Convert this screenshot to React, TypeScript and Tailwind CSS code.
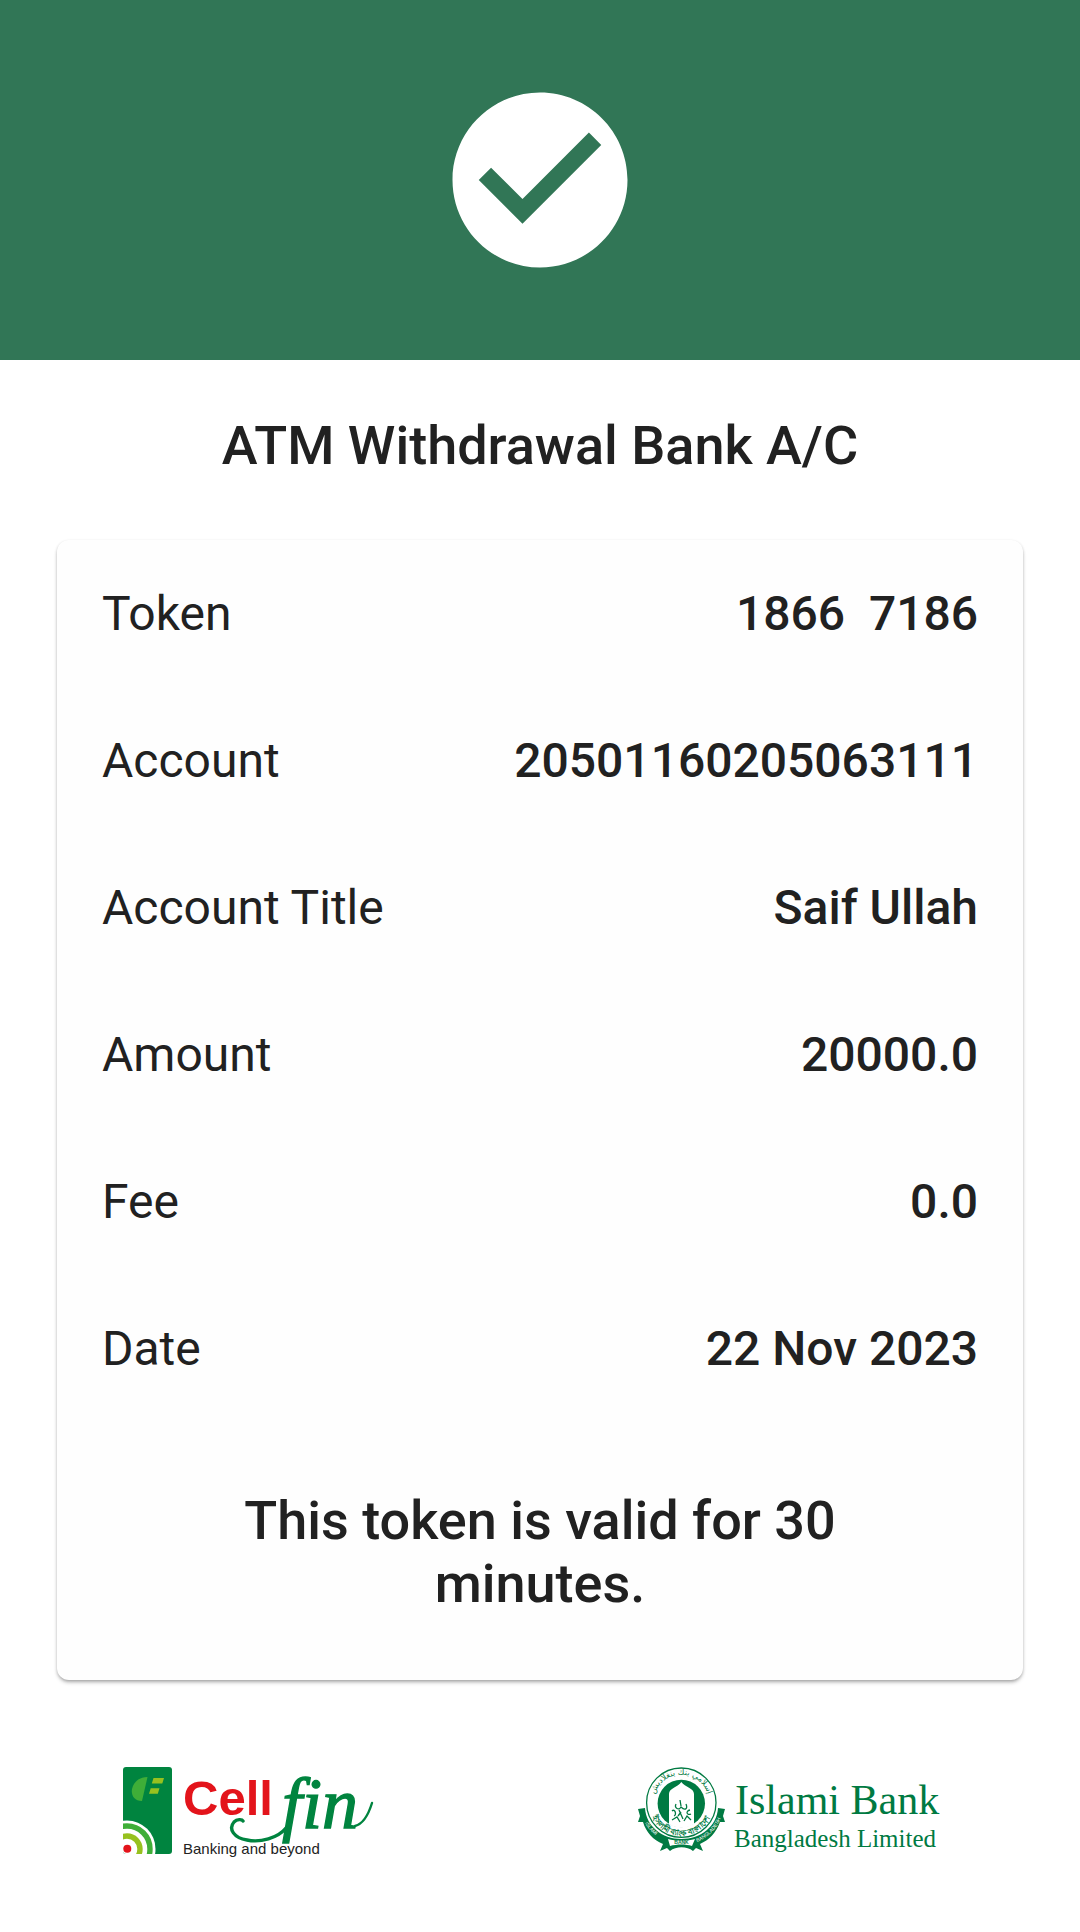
const details = [
  { label: "Token", value: "1866\u00a0\u00a07186" },
  { label: "Account", value: "20501160205063111" },
  { label: "Account Title", value: "Saif Ullah" },
  { label: "Amount", value: "20000.0" },
  { label: "Fee", value: "0.0" },
  { label: "Date", value: "22 Nov 2023" },
];

function CheckCircle() {
  return (
    <svg viewBox="0 0 24 24" className="size-[210px] fill-white" role="img" aria-label="Success">
      <path d="M12 2C6.48 2 2 6.48 2 12s4.48 10 10 10 10-4.48 10-10S17.52 2 12 2zm-2 15l-5-5 1.41-1.41L10 14.17l7.59-7.59L19 8l-9 9z" />
    </svg>
  );
}

function CellfinLogo() {
  return (
    <svg viewBox="0 0 280 120" className="w-[280px]" role="img" aria-label="Cellfin, Banking and beyond">
      <defs>
        <clipPath id="phone">
          <rect x="13" y="17" width="49" height="87" rx="3" />
        </clipPath>
      </defs>
      <g clipPath="url(#phone)">
        <rect x="13" y="17" width="49" height="87" fill="#00843f" />
        <circle cx="17" cy="99" r="28.5" fill="#fff" />
        <circle cx="17" cy="99" r="23" fill="none" stroke="#3fae38" strokeWidth="5.4" />
        <circle cx="17" cy="99" r="13" fill="none" stroke="#97c11f" strokeWidth="5.4" />
        <circle cx="17.3" cy="98.7" r="4" fill="#e3141b" />
        <path d="M37.5 27L32 51C24 51 21 45 22 39C24 31 30 27 37.5 27Z" fill="#3fae38" />
        <path d="M43.5 28H54L52.3 33.5H41.8ZM40.7 38.3H49.5L47.8 43.8H39Z" fill="#97c11f" />
      </g>
      <text x="73" y="65" fontSize="49" fontWeight="700" fill="#e3141b" fontFamily='"Liberation Sans", sans-serif'>Cell</text>
      <text x="172" y="78" fontSize="72" fontStyle="italic" fill="#00843f" stroke="#00843f" strokeWidth="1.4" fontFamily='"Liberation Serif", serif' className="[font-variant-ligatures:none]">fin</text>
      <path d="M176 78C168 88 150 93 137 90C124 88 118 79 124 72C127 69 132 69 133 71" fill="none" stroke="#00843f" strokeWidth="3.4" strokeLinecap="round" />
      <path d="M245 76C253 74 258 66 262 53" fill="none" stroke="#00843f" strokeWidth="2.4" strokeLinecap="round" />
      <text x="73" y="104" fontSize="15" fill="#222" fontFamily='"Liberation Sans", sans-serif'>Banking and beyond</text>
    </svg>
  );
}

function IslamiBankLogo() {
  return (
    <svg viewBox="0 0 340 120" className="w-[340px]" role="img" aria-label="Islami Bank Bangladesh Limited" fill="#007a42">
      <defs>
        <path id="arcTop" d="M34.5 61A28 28 0 1 1 88 61" />
        <path id="arcBottom" d="M29 57A32.5 32.5 0 0 0 93.6 57" />
        <path id="ribbonLeft" d="M25 73A41 41 0 0 0 48 92" />
        <path id="ribbonRight" d="M77 92A42 42 0 0 0 102 64" />
      </defs>
      <path d="M18 59L25 58C26 76 42 89 61.3 89C81 89 97 76 98 58L105 59L103 66L105 72L100 72C96 83 89 90 80 94L83 101L76 98L73 101C67 96 56 96 50 101L47 98L40 101L43 94C33 90 26 82 23 72H18L20 66Z" />
      <path d="M48 89C56 91 67 91 75 89L72 96C66 94 57 94 50 96Z" fill="#fff" />
      <circle cx="61.3" cy="52.7" r="34.7" fill="#fff" stroke="#007a42" strokeWidth="1.3" />
      <circle cx="61.3" cy="53.5" r="23.7" />
      <path d="M49 74V44C49 38 58 37 61.3 32C65 37 74 38 74 44V74C67 79 56 79 49 74Z" fill="#fff" />
      <path d="M60 50L61 56M56 54C54 58 59 61 61 57C65 61 68 59 66 54M52 61C55 58 57 65 54 66M59 60L63 69M70 60C65 61 67 66 71 64M52 70L57 67L60 72M64 71L67 66L71 70M61 62L58 66" fill="none" stroke="#007a42" strokeWidth="1.3" />
      <text fontSize="8" fontFamily='"DejaVu Sans", sans-serif' textAnchor="middle">
        <textPath href="#arcTop" startOffset="50%">إسلامي بنك بنغلاديش</textPath>
      </text>
      <text fontSize="8" fontWeight="700" fontFamily='"Noto Sans", sans-serif' textAnchor="middle">
        <textPath href="#arcBottom" startOffset="50%">ইসলামী ব্যাংক বাংলাদেশ</textPath>
      </text>
      <text fontSize="5" fill="#fff" fontFamily='"Liberation Sans", sans-serif'>
        <textPath href="#ribbonLeft">ISLAMI</textPath>
      </text>
      <text fontSize="5" fill="#fff" fontFamily='"Liberation Sans", sans-serif'>
        <textPath href="#ribbonRight">BANGLADESH</textPath>
      </text>
      <text x="61.5" y="94" fontSize="5" fontWeight="700" textAnchor="middle" fontFamily='"Liberation Sans", sans-serif'>BANK</text>
      <text x="115" y="64" fontSize="42" fontFamily='"Liberation Serif", serif'>Islami Bank</text>
      <text x="114" y="97" fontSize="25" fontFamily='"Liberation Serif", serif'>Bangladesh Limited</text>
    </svg>
  );
}

export default function App() {
  return (
    <main className="min-h-screen bg-white font-['Roboto',sans-serif] text-[#212121]">
      <header className="flex h-[360px] items-center justify-center bg-[#317656]">
        <CheckCircle />
      </header>
      <h1 className="pt-[50px] pb-[58px] text-center text-[54px] leading-[72px] font-medium">ATM Withdrawal Bank A/C</h1>
      <section className="mx-[57px] rounded-xl bg-[#fefefe] pb-[65px] shadow-[0_3px_4px_-1px_rgba(0,0,0,0.3),0_1px_3px_rgba(0,0,0,0.14)]">
        <dl>
          {details.map((item) => (
            <div key={item.label} className="flex h-[147px] items-center justify-between px-[45px] text-[48px] leading-[56px]">
              <dt>{item.label}</dt>
              <dd className="font-medium">{item.value}</dd>
            </div>
          ))}
        </dl>
        <p className="px-[150px] pt-[67px] text-center text-[54px] leading-[63px] font-medium">
          This token is valid for 30 minutes.
        </p>
      </section>
      <footer className="flex justify-between pt-[70px] pr-[120px] pb-[62px] pl-[110px]">
        <CellfinLogo />
        <IslamiBankLogo />
      </footer>
    </main>
  );
}
